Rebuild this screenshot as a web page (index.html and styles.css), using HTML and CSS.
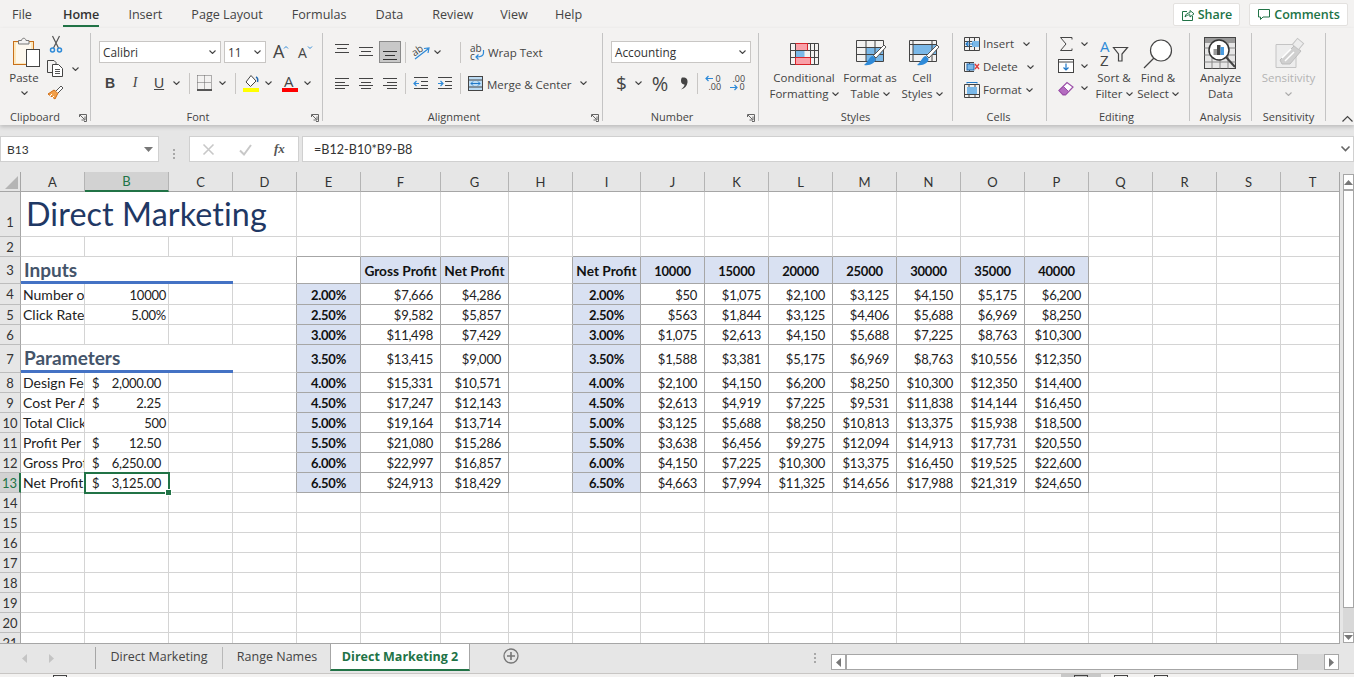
FILE: index.html
```html
<!DOCTYPE html>
<html lang="en">
<head>
<meta charset="utf-8">
<title>Direct Marketing 2 - Excel</title>
<link rel="stylesheet" href="styles.css">
</head>
<body>
<svg class="sprite" width="0" height="0" aria-hidden="true">
  <symbol id="chev" viewBox="0 0 7 4"><path d="M.5.5 3.5 3.5 6.5.5" fill="none" stroke="#444" stroke-width="1.1"/></symbol>
  <symbol id="launch" viewBox="0 0 8 8"><path d="M.5 3V.5H7.500V7.500H5M1 1 5.500 5.500M2.500 6H6V2.500" fill="none" stroke="#666" stroke-width="1"/></symbol>
  <symbol id="lines" viewBox="0 0 14 12"><path d="M0 1.500H14M0 5.500H10M0 8.500H14M0 11.500H10" stroke="#444" stroke-width="1"/></symbol>
</svg>
<div class="app">
  <header class="top">
    <nav class="menu">
      <span>File</span><span class="on">Home</span><span>Insert</span><span>Page Layout</span><span>Formulas</span><span>Data</span><span>Review</span><span>View</span><span>Help</span>
    </nav>
    <div class="actions">
      <button class="act"><svg width="14" height="14" viewBox="0 0 14 14"><path d="M6 3.500H1.500V12.500H11.500V8M4 9C4.500 6 6.500 4.800 9 4.800V2.500L13 5.800 9 9V6.800C7 6.800 5.500 7.500 4 9Z" fill="none" stroke="#217346"/></svg>Share</button>
      <button class="act act-c"><svg width="14" height="13" viewBox="0 0 14 13"><path d="M1.500 1.500H12.500V9H6L3.500 11.500V9H1.500Z" fill="none" stroke="#217346"/></svg>Comments</button>
    </div>
  </header>

  <section class="ribbon">
    <div class="group g-clip">
      <div class="body clip-body">
        <div class="paste">
          <svg width="29" height="32" viewBox="0 0 29 32"><rect x=".5" y="5.500" width="20" height="23" fill="#fde8bd" stroke="#c8701a"/><rect x="3" y="7" width="15" height="20" fill="#fdf8ee"/><path d="M5.500 8V4.500H8.500C9 1.500 12.500 1.500 13 4.500H16V8Z" fill="#f3f2f1" stroke="#777"/><rect x="13.500" y="13.500" width="13" height="17" fill="#fff" stroke="#444"/></svg>
          <span class="t">Paste</span>
          <svg class="c" width="7" height="4"><use href="#chev"/></svg>
        </div>
        <div class="clip-tools">
          <svg class="ci1" width="12" height="17" viewBox="0 0 12 17"><path d="M2.500 0 8.500 12M9.500 0 3.500 12" stroke="#555" stroke-width="1.200" fill="none"/><circle cx="2.500" cy="14" r="2" fill="none" stroke="#2e8ad8" stroke-width="1.500"/><circle cx="9.500" cy="14" r="2" fill="none" stroke="#2e8ad8" stroke-width="1.500"/></svg>
          <div class="copy-row"><svg width="16" height="17" viewBox="0 0 16 17"><path d="M6 12.500H.5V.5H7L9 2.500V4" fill="none" stroke="#444"/><path d="M5.500 4.500H11.500L15.500 8.500V16.500H5.500Z" fill="#fff" stroke="#444"/><path d="M8 9.500H13M8 11.500H13M8 13.500H13" stroke="#555"/></svg><svg class="m9" width="7" height="4"><use href="#chev"/></svg></div>
          <svg class="ci3" width="17" height="16" viewBox="0 0 17 16"><path d="M1 9 8 14 11 8 7 5Z" fill="#f2a04b" stroke="#d06c12"/><path d="M3 11 5 9M5 13 7 11" stroke="#fff"/><path d="M9 6 14 1 16 3 11 8" fill="#fff" stroke="#555"/></svg>
        </div>
      </div>
      <div class="label">Clipboard<svg class="launch" width="8" height="8"><use href="#launch"/></svg></div>
    </div>

    <div class="group g-font">
      <div class="body stack">
        <div class="row">
          <div class="sel w122"><span>Calibri</span><svg width="7" height="4"><use href="#chev"/></svg></div>
          <div class="sel w42 m3"><span>11</span><svg width="7" height="4"><use href="#chev"/></svg></div>
          <svg class="m7" width="15" height="15" viewBox="0 0 15 15"><text x="0" y="13" class="glyph g18">A</text><path d="M11 3.500 13 1.500 15 3.500" fill="none" stroke="#2e8ad8"/></svg>
          <svg class="m10" width="15" height="15" viewBox="0 0 15 15"><text x="0" y="13" class="glyph g14">A</text><path d="M10 1.500 12 3.500 14 1.500" fill="none" stroke="#2e8ad8"/></svg>
        </div>
        <div class="row">
          <span class="fmt b m6">B</span>
          <span class="fmt i m15">I</span>
          <span class="fmt u m14">U</span>
          <svg class="m9" width="7" height="4"><use href="#chev"/></svg>
          <i class="vsep m9"></i>
          <svg class="m7" width="15" height="16" viewBox="0 0 15 16"><path d="M.5 .5H14.500V14M.5.5V14M7.500.5V14M.5 7.500H14.500" fill="none" stroke="#666" stroke-dasharray="1 1"/><path d="M0 15H15" stroke="#222" stroke-width="1.500"/></svg>
          <svg class="m7" width="7" height="4"><use href="#chev"/></svg>
          <i class="vsep m9"></i>
          <svg class="m7" width="16" height="18" viewBox="0 0 16 18"><path d="M8 1.500 13 7 7.500 12.500 3 8Z" fill="#fff" stroke="#444"/><path d="M13 3C15 4 15 6 14.500 8" fill="none" stroke="#2068b0" stroke-width="1.500"/><rect y="14" width="16" height="4" fill="#ffff00"/></svg>
          <svg class="m6" width="7" height="4"><use href="#chev"/></svg>
          <svg class="m10" width="16" height="18" viewBox="0 0 16 18"><text x="2" y="13" class="glyph g15">A</text><rect y="14" width="16" height="4" fill="#ff0000"/></svg>
          <svg class="m6" width="7" height="4"><use href="#chev"/></svg>
        </div>
      </div>
      <div class="label">Font<svg class="launch" width="8" height="8"><use href="#launch"/></svg></div>
    </div>

    <div class="group g-align">
      <div class="body stack">
        <div class="row">
          <svg width="14" height="18" viewBox="0 0 14 18"><path d="M0 1.500H14M2 5.500H12M0 9.500H14" stroke="#444"/></svg>
          <svg class="m10" width="14" height="18" viewBox="0 0 14 18"><path d="M0 4.500H14M2 8.500H12M0 12.500H14" stroke="#444"/></svg>
          <span class="box m6"><svg width="14" height="18" viewBox="0 0 14 18"><path d="M0 8.500H14M2 12.500H12M0 16.500H14" stroke="#333"/></svg></span>
          <i class="vsep m4"></i>
          <svg class="m7" width="19" height="15" viewBox="0 0 19 15"><text x="0" y="9" class="glyph g10" transform="rotate(-35 5 8)">ab</text><path d="M2 14 15 4M11 3.500 16 3 15 8" fill="none" stroke="#2e8ad8" stroke-width="1.200"/></svg>
          <svg class="m2" width="7" height="4"><use href="#chev"/></svg>
          <i class="vsep m19"></i>
          <svg class="m9" width="15" height="17" viewBox="0 0 15 17"><text x="0" y="8" class="glyph g10">ab</text><text x="0" y="16" class="glyph g10">c</text><path d="M13.500 6V9C13.500 12 11 13 6 13M8.500 10.500 6 13 8.500 15.500" fill="none" stroke="#2e8ad8" stroke-width="1.200"/></svg>
          <span class="t m3">Wrap Text</span>
        </div>
        <div class="row">
          <svg width="14" height="12"><use href="#lines"/></svg>
          <svg class="m10" width="14" height="12" viewBox="0 0 14 12"><path d="M0 1.500H14M2 5.500H12M0 8.500H14M2 11.500H12" stroke="#444"/></svg>
          <svg class="m10" width="14" height="12" viewBox="0 0 14 12"><path d="M0 1.500H14M4 5.500H14M0 8.500H14M4 11.500H14" stroke="#444"/></svg>
          <i class="vsep m8"></i>
          <svg class="m8" width="14" height="12" viewBox="0 0 14 12"><path d="M0 .5H14M7 4.500H14M7 8.500H14M0 11.500H14" stroke="#444"/><path d="M5 6.500H0M2.500 4 0 6.500 2.500 9" fill="none" stroke="#2e8ad8" stroke-width="1.200"/></svg>
          <svg class="m10" width="14" height="12" viewBox="0 0 14 12"><path d="M0 .5H14M7 4.500H14M7 8.500H14M0 11.500H14" stroke="#444"/><path d="M0 6.500H5M2.500 4 5 6.500 2.500 9" fill="none" stroke="#2e8ad8" stroke-width="1.200"/></svg>
          <i class="vsep m8"></i>
          <svg class="m7" width="15" height="15" viewBox="0 0 15 15"><rect x=".5" y=".5" width="14" height="14" fill="#bcdcf4" stroke="#444"/><path d="M.5 4H14.500M.5 11H14.500" stroke="#444"/><path d="M3 7.500H12M5 5.500 3 7.500 5 9.500M10 5.500 12 7.500 10 9.500" fill="none" stroke="#1f78c8"/></svg>
          <span class="t low m4">Merge &amp; Center</span>
          <svg class="m8" width="7" height="4"><use href="#chev"/></svg>
        </div>
      </div>
      <div class="label">Alignment<svg class="launch" width="8" height="8"><use href="#launch"/></svg></div>
    </div>

    <div class="group g-num">
      <div class="body stack">
        <div class="row"><div class="sel w140"><span>Accounting</span><svg width="7" height="4"><use href="#chev"/></svg></div></div>
        <div class="row">
          <span class="sym m5">$</span>
          <svg class="m8" width="7" height="4"><use href="#chev"/></svg>
          <span class="sym pct m8">%</span>
          <svg class="m9" width="10" height="13" viewBox="0 0 10 13"><path d="M3 0.500C7 0 9 2 8.500 5.500 8 9 5.500 11.500 2 12.500 4.500 10.500 5.500 9 5.500 7.500 3.500 7.500 2 6 2 4 2 2 2.500 1 3 .5Z" fill="#444"/></svg>
          <i class="vsep m8"></i>
          <svg class="m7" width="16" height="16" viewBox="0 0 16 16"><path d="M8 3.500H1M3.500 1 1 3.500 3.500 6" fill="none" stroke="#2e8ad8" stroke-width="1.200"/><text x="10.500" y="7" class="glyph g9">0</text><text x="3.400" y="15" class="glyph g9">.00</text></svg>
          <svg class="m8" width="16" height="16" viewBox="0 0 16 16"><text x="3.400" y="7" class="glyph g9">.00</text><path d="M1 12.500H8M5.500 10 8 12.500 5.500 15" fill="none" stroke="#2e8ad8" stroke-width="1.200"/><text x="10.500" y="15" class="glyph g9">0</text></svg>
        </div>
      </div>
      <div class="label">Number<svg class="launch" width="8" height="8"><use href="#launch"/></svg></div>
    </div>

    <div class="group g-styles">
      <div class="body big-row">
        <div class="big w74">
          <div class="big-ic"><svg width="29" height="22" viewBox="0 0 29 22"><path d="M5.500 .5H17.500V7.500H5.500Z" fill="#f9a0a8"/><path d="M5.500 7.500H14.500V14.500H5.500Z" fill="#7ab8e8"/><path d="M5.500 14.500H20.500V21.500H5.500Z" fill="#f9a0a8"/><path d="M.5.5H28.500V21.500H.5ZM.5 7.500H28.500M.5 14.500H28.500M5.500.5V21.500M20.500.5V21.500M24.500.5V21.500" fill="none" stroke="#444"/><path d="M5.500.5H17.500V7.500M5.500 14.500H20.500V21.500H5.500Z" fill="none" stroke="#d8232a"/></svg></div>
          <span class="t">Conditional</span><span class="t">Formatting <svg width="7" height="4"><use href="#chev"/></svg></span>
        </div>
        <div class="big w58">
          <div class="big-ic"><svg width="31" height="27" viewBox="0 0 31 27"><path d="M10 7.500H27.500V21.500H10Z" fill="#7ab8e8"/><path d="M.5.5H27.500V21.500H.5ZM.5 7.500H27.500M.5 14.500H27.500M10 .5V21.500M19 .5V21.500" fill="none" stroke="#444"/><path d="M30 7 20 18 17.500 15.500 28 5Z" fill="#fff" stroke="#555"/><path d="M17 16C13 16.500 13 21 8 25 14 26 20 23 19.500 18.500Z" fill="#2e8ad8"/></svg></div>
          <span class="t">Format as</span><span class="t">Table <svg width="7" height="4"><use href="#chev"/></svg></span>
        </div>
        <div class="big w46">
          <div class="big-ic"><svg width="31" height="27" viewBox="0 0 31 27"><path d="M4 4.500H27V15H4Z" fill="#7ab8e8"/><path d="M.5.5H27.500V21.500H.5ZM.5 4.500H27.500M.5 14.500H27.500M4 .5V21.500M23 .5V21.500" fill="none" stroke="#444"/><path d="M30 7 20 18 17.500 15.500 28 5Z" fill="#fff" stroke="#555"/><path d="M17 16C13 16.500 13 21 8 25 14 26 20 23 19.500 18.500Z" fill="#2e8ad8"/></svg></div>
          <span class="t">Cell</span><span class="t">Styles <svg width="7" height="4"><use href="#chev"/></svg></span>
        </div>
      </div>
      <div class="label">Styles</div>
    </div>

    <div class="group g-cells">
      <div class="body cell-list">
        <div class="cell-row"><svg width="16" height="14" viewBox="0 0 16 14"><path d="M.5.5H15.500V13.500H.5ZM.5 4.500H15.500M.5 9.500H15.500M5.500.5V13.500M10.500.5V13.500" fill="none" stroke="#444"/><rect x="8" y="4" width="7" height="6" fill="#7ab8e8"/><path d="M9 7H2M4.500 4.500 2 7 4.500 9.500" fill="none" stroke="#1f78c8" stroke-width="1.200"/></svg><span class="t m3">Insert</span><svg class="m9" width="7" height="4"><use href="#chev"/></svg></div>
        <div class="cell-row"><svg width="16" height="14" viewBox="0 0 16 14"><path d="M.5 2.500H10M.5 11.500H10M.5 2.500V11.500M5.500 2.500V11.500" fill="none" stroke="#444"/><rect x="3" y="4" width="7" height="6" fill="#7ab8e8" stroke="#2068b0"/><path d="M11 4 15 9M15 4 11 9" stroke="#e03c3c" stroke-width="1.300"/></svg><span class="t m3">Delete</span><svg class="m9" width="7" height="4"><use href="#chev"/></svg></div>
        <div class="cell-row"><svg width="16" height="16" viewBox="0 0 16 16"><path d="M.5 2.500H15.500V15.500H.5ZM.5 12.500H15.500M5 2.500V15.500M11 2.500V15.500" fill="none" stroke="#444"/><rect x="3" y="5" width="10" height="7" fill="#7ab8e8"/><path d="M3 .5H13M3 0V1.500M13 0V1.500" stroke="#1f78c8"/></svg><span class="t m3">Format</span><svg class="m4" width="7" height="4"><use href="#chev"/></svg></div>
      </div>
      <div class="label">Cells</div>
    </div>

    <div class="group g-edit">
      <div class="body big-row">
        <div class="edit-col">
          <div class="edit-row"><svg class="m2" width="12" height="14" viewBox="0 0 12 14"><path d="M12 2.500V.5H.5L6 7 .5 13.500H12V11.500" fill="none" stroke="#444"/></svg><svg class="m9" width="7" height="4"><use href="#chev"/></svg></div>
          <div class="edit-row"><svg width="16" height="14" viewBox="0 0 16 14"><rect x=".5" y=".5" width="15" height="13" fill="#fff" stroke="#444"/><path d="M.5 3H15.500" stroke="#444"/><path d="M8 4.500V11M5.500 8.500 8 11 10.500 8.500" fill="none" stroke="#1f78c8" stroke-width="1.200"/></svg><svg class="m7" width="7" height="4"><use href="#chev"/></svg></div>
          <div class="edit-row"><svg width="16" height="15" viewBox="0 0 16 15"><path d="M1 9.500 9 1.500 15 6 7.500 14H5Z" fill="#fff" stroke="#9b4fa8" stroke-width="1.200"/><path d="M1 9.500 5 13.500H7.500L10.500 10.500 5.500 5.500Z" fill="#b46cc0" stroke="#9b4fa8"/></svg><svg class="m7" width="7" height="4"><use href="#chev"/></svg></div>
        </div>
        <div class="big w44">
          <div class="big-ic"><svg width="29" height="27" viewBox="0 0 29 27"><text x="0" y="12" class="glyph az">A</text><text x="0" y="26" class="glyph z">Z</text><path d="M13.500 7.500H27.500L22 14V21H18.500V14Z" fill="none" stroke="#444" stroke-width="1.200"/></svg></div>
          <span class="t">Sort &amp;</span><span class="t">Filter <svg width="7" height="4"><use href="#chev"/></svg></span>
        </div>
        <div class="big w44">
          <div class="big-ic"><svg width="30" height="30" viewBox="0 0 30 30"><circle cx="18" cy="11.500" r="10.500" fill="#fff" stroke="#444" stroke-width="1.200"/><path d="M11 19 1 29" stroke="#444" stroke-width="1.200"/></svg></div>
          <span class="t">Find &amp;</span><span class="t">Select <svg width="7" height="4"><use href="#chev"/></svg></span>
        </div>
      </div>
      <div class="label">Editing</div>
    </div>

    <div class="group g-an">
      <div class="body big-row">
        <div class="big wfull">
          <div class="big-ic"><svg width="33" height="33" viewBox="0 0 33 33"><rect x=".5" y=".5" width="31" height="31" fill="#e6e6e6" stroke="#444"/><rect x="1" y="1" width="30" height="5" fill="#999"/><path d="M.5 11H31.500M.5 18H31.500M.5 25H31.500M8 6V31.500M16 6V31.500M24 6V31.500" stroke="#888"/><circle cx="15" cy="13" r="10" fill="#fff" stroke="#333" stroke-width="1.500"/><path d="M22 20 31 30" stroke="#444" stroke-width="2"/><rect x="9.500" y="12" width="3.500" height="6" fill="#9a9a9a"/><rect x="13" y="8" width="3.500" height="10" fill="#444"/><rect x="16.500" y="10" width="3.500" height="8" fill="#4a9ce0"/></svg></div>
          <span class="t">Analyze</span><span class="t">Data</span>
        </div>
      </div>
      <div class="label">Analysis</div>
    </div>

    <div class="group g-sens">
      <div class="body big-row">
        <div class="big wfull dim">
          <div class="big-ic"><svg width="28" height="30" viewBox="0 0 28 30"><path d="M1 5.500H21V28.500H1Z" fill="#ededed" stroke="#c4c4c4"/><path d="M5 21 19 7 26 12 15 25 7 25Z" fill="#d0d0d0" stroke="#bdbdbd"/><path d="M7 19 16 10M10 22 19 13" stroke="#fff" stroke-width="1.500"/><rect x="19" y="1" width="8" height="8" fill="#ededed" stroke="#c4c4c4" transform="rotate(40 23 5)"/></svg></div>
          <span class="t">Sensitivity</span>
          <svg class="c" width="7" height="4" opacity=".4"><use href="#chev"/></svg>
        </div>
      </div>
      <div class="label">Sensitivity</div>
    </div>

    <svg class="collapse" width="11" height="6" viewBox="0 0 11 6"><path d="M.5 5.500 5.500.5 10.500 5.500" fill="none" stroke="#444" stroke-width="1.200"/></svg>
  </section>

  <section class="fbar">
    <div class="namebox"><span>B13</span><svg width="9" height="5" viewBox="0 0 9 5"><path d="M0 0H9L4.500 5Z" fill="#777"/></svg></div>
    <div class="grip"><i></i><i></i><i></i></div>
    <div class="fx-box">
      <svg width="13" height="13" viewBox="0 0 13 13"><path d="M1.500 1.500 11.500 11.500M11.500 1.500 1.500 11.500" stroke="#c8c8c8" stroke-width="1.600"/></svg>
      <svg width="13" height="13" viewBox="0 0 13 13"><path d="M1 7.500 5 11.500 12 2" fill="none" stroke="#c8c8c8" stroke-width="2"/></svg>
      <span class="fx">fx</span>
    </div>
    <div class="formula"><span>=B12-B10*B9-B8</span><svg width="9" height="6" viewBox="0 0 9 6"><path d="M.5.5 4.500 4.500 8.500.5" fill="none" stroke="#666" stroke-width="1.600"/></svg></div>
  </section>

  <section class="sheetwrap">
    <div class="sheet">
      <table class="grid">
        <colgroup>
          <col class="c-h"><col class="c64"><col class="c84"><col class="c64"><col class="c64"><col class="c64"><col class="c80"><col class="c68"><col class="c64"><col class="c68"><col class="c64"><col class="c64"><col class="c64"><col class="c64"><col class="c64"><col class="c64"><col class="c64"><col class="c64"><col class="c64"><col class="c64"><col class="c64">
        </colgroup>
        <thead>
          <tr class="r-head"><th class="corner"><svg width="13" height="13" viewBox="0 0 13 13"><path d="M13 0V13H0Z" fill="#b5b5b5"/></svg></th><th>A</th><th class="cur">B</th><th>C</th><th>D</th><th>E</th><th>F</th><th>G</th><th>H</th><th>I</th><th>J</th><th>K</th><th>L</th><th>M</th><th>N</th><th>O</th><th>P</th><th>Q</th><th>R</th><th>S</th><th>T</th></tr>
        </thead>
        <tbody>
          <tr class="r1"><th>1</th><td colspan="4" class="title">Direct Marketing</td><td></td><td></td><td></td><td></td><td></td><td></td><td></td><td></td><td></td><td></td><td></td><td></td><td></td><td></td><td></td><td></td></tr>
          <tr><th>2</th><td></td><td></td><td></td><td></td><td class="eb"></td><td class="eb"></td><td class="eb"></td><td></td><td class="eb"></td><td class="eb"></td><td class="eb"></td><td class="eb"></td><td class="eb"></td><td class="eb"></td><td class="eb"></td><td class="eb"></td><td></td><td></td><td></td><td></td></tr>
          <tr class="r3"><th>3</th><td colspan="3" class="sec">Inputs</td><td class="er"></td><td class="d"></td><td class="d hd txt">Gross Profit</td><td class="d hd txt">Net Profit</td><td class="er"></td><td class="d hd txt">Net Profit</td><td class="d hd">10000</td><td class="d hd">15000</td><td class="d hd">20000</td><td class="d hd">25000</td><td class="d hd">30000</td><td class="d hd">35000</td><td class="d hd">40000</td><td></td><td></td><td></td><td></td></tr>
          <tr class="r4"><th>4</th><td class="lbl">Number of Customers</td><td class="num">10000</td><td></td><td class="er"></td><td class="d hd">2.00%</td><td class="d v">$7,666</td><td class="d v">$4,286</td><td class="er"></td><td class="d hd">2.00%</td><td class="d v">$50</td><td class="d v">$1,075</td><td class="d v">$2,100</td><td class="d v">$3,125</td><td class="d v">$4,150</td><td class="d v">$5,175</td><td class="d v">$6,200</td><td></td><td></td><td></td><td></td></tr>
          <tr><th>5</th><td class="lbl">Click Rate</td><td class="num">5.00%</td><td></td><td class="er"></td><td class="d hd">2.50%</td><td class="d v">$9,582</td><td class="d v">$5,857</td><td class="er"></td><td class="d hd">2.50%</td><td class="d v">$563</td><td class="d v">$1,844</td><td class="d v">$3,125</td><td class="d v">$4,406</td><td class="d v">$5,688</td><td class="d v">$6,969</td><td class="d v">$8,250</td><td></td><td></td><td></td><td></td></tr>
          <tr><th>6</th><td></td><td></td><td></td><td class="er"></td><td class="d hd">3.00%</td><td class="d v">$11,498</td><td class="d v">$7,429</td><td class="er"></td><td class="d hd">3.00%</td><td class="d v">$1,075</td><td class="d v">$2,613</td><td class="d v">$4,150</td><td class="d v">$5,688</td><td class="d v">$7,225</td><td class="d v">$8,763</td><td class="d v">$10,300</td><td></td><td></td><td></td><td></td></tr>
          <tr class="r7"><th>7</th><td colspan="3" class="sec">Parameters</td><td class="er"></td><td class="d hd">3.50%</td><td class="d v">$13,415</td><td class="d v">$9,000</td><td class="er"></td><td class="d hd">3.50%</td><td class="d v">$1,588</td><td class="d v">$3,381</td><td class="d v">$5,175</td><td class="d v">$6,969</td><td class="d v">$8,763</td><td class="d v">$10,556</td><td class="d v">$12,350</td><td></td><td></td><td></td><td></td></tr>
          <tr><th>8</th><td class="lbl">Design Fee</td><td class="acct"><div><span>$</span><span>2,000.00</span></div></td><td></td><td class="er"></td><td class="d hd">4.00%</td><td class="d v">$15,331</td><td class="d v">$10,571</td><td class="er"></td><td class="d hd">4.00%</td><td class="d v">$2,100</td><td class="d v">$4,150</td><td class="d v">$6,200</td><td class="d v">$8,250</td><td class="d v">$10,300</td><td class="d v">$12,350</td><td class="d v">$14,400</td><td></td><td></td><td></td><td></td></tr>
          <tr><th>9</th><td class="lbl">Cost Per Ad</td><td class="acct"><div><span>$</span><span>2.25</span></div></td><td></td><td class="er"></td><td class="d hd">4.50%</td><td class="d v">$17,247</td><td class="d v">$12,143</td><td class="er"></td><td class="d hd">4.50%</td><td class="d v">$2,613</td><td class="d v">$4,919</td><td class="d v">$7,225</td><td class="d v">$9,531</td><td class="d v">$11,838</td><td class="d v">$14,144</td><td class="d v">$16,450</td><td></td><td></td><td></td><td></td></tr>
          <tr><th>10</th><td class="lbl">Total Clicks</td><td class="num">500</td><td></td><td class="er"></td><td class="d hd">5.00%</td><td class="d v">$19,164</td><td class="d v">$13,714</td><td class="er"></td><td class="d hd">5.00%</td><td class="d v">$3,125</td><td class="d v">$5,688</td><td class="d v">$8,250</td><td class="d v">$10,813</td><td class="d v">$13,375</td><td class="d v">$15,938</td><td class="d v">$18,500</td><td></td><td></td><td></td><td></td></tr>
          <tr><th>11</th><td class="lbl">Profit Per Click</td><td class="acct"><div><span>$</span><span>12.50</span></div></td><td></td><td class="er"></td><td class="d hd">5.50%</td><td class="d v">$21,080</td><td class="d v">$15,286</td><td class="er"></td><td class="d hd">5.50%</td><td class="d v">$3,638</td><td class="d v">$6,456</td><td class="d v">$9,275</td><td class="d v">$12,094</td><td class="d v">$14,913</td><td class="d v">$17,731</td><td class="d v">$20,550</td><td></td><td></td><td></td><td></td></tr>
          <tr><th>12</th><td class="lbl">Gross Profit</td><td class="acct"><div><span>$</span><span>6,250.00</span></div></td><td></td><td class="er"></td><td class="d hd">6.00%</td><td class="d v">$22,997</td><td class="d v">$16,857</td><td class="er"></td><td class="d hd">6.00%</td><td class="d v">$4,150</td><td class="d v">$7,225</td><td class="d v">$10,300</td><td class="d v">$13,375</td><td class="d v">$16,450</td><td class="d v">$19,525</td><td class="d v">$22,600</td><td></td><td></td><td></td><td></td></tr>
          <tr><th class="cur-row">13</th><td class="lbl">Net Profit</td><td class="acct active"><div><span>$</span><span>3,125.00</span></div><i class="handle"></i></td><td></td><td class="er"></td><td class="d hd">6.50%</td><td class="d v">$24,913</td><td class="d v">$18,429</td><td class="er"></td><td class="d hd">6.50%</td><td class="d v">$4,663</td><td class="d v">$7,994</td><td class="d v">$11,325</td><td class="d v">$14,656</td><td class="d v">$17,988</td><td class="d v">$21,319</td><td class="d v">$24,650</td><td></td><td></td><td></td><td></td></tr>
          <tr><th>14</th><td></td><td></td><td></td><td></td><td></td><td></td><td></td><td></td><td></td><td></td><td></td><td></td><td></td><td></td><td></td><td></td><td></td><td></td><td></td><td></td></tr>
          <tr><th>15</th><td></td><td></td><td></td><td></td><td></td><td></td><td></td><td></td><td></td><td></td><td></td><td></td><td></td><td></td><td></td><td></td><td></td><td></td><td></td><td></td></tr>
          <tr><th>16</th><td></td><td></td><td></td><td></td><td></td><td></td><td></td><td></td><td></td><td></td><td></td><td></td><td></td><td></td><td></td><td></td><td></td><td></td><td></td><td></td></tr>
          <tr><th>17</th><td></td><td></td><td></td><td></td><td></td><td></td><td></td><td></td><td></td><td></td><td></td><td></td><td></td><td></td><td></td><td></td><td></td><td></td><td></td><td></td></tr>
          <tr><th>18</th><td></td><td></td><td></td><td></td><td></td><td></td><td></td><td></td><td></td><td></td><td></td><td></td><td></td><td></td><td></td><td></td><td></td><td></td><td></td><td></td></tr>
          <tr><th>19</th><td></td><td></td><td></td><td></td><td></td><td></td><td></td><td></td><td></td><td></td><td></td><td></td><td></td><td></td><td></td><td></td><td></td><td></td><td></td><td></td></tr>
          <tr><th>20</th><td></td><td></td><td></td><td></td><td></td><td></td><td></td><td></td><td></td><td></td><td></td><td></td><td></td><td></td><td></td><td></td><td></td><td></td><td></td><td></td></tr>
          <tr><th>21</th><td></td><td></td><td></td><td></td><td></td><td></td><td></td><td></td><td></td><td></td><td></td><td></td><td></td><td></td><td></td><td></td><td></td><td></td><td></td><td></td></tr>
        </tbody>
      </table>
    </div>
    <div class="vscroll">
      <div class="sbtn"><svg width="9" height="5" viewBox="0 0 9 5"><path d="M4.500 0 9 5H0Z" fill="#777"/></svg></div>
      <div class="vthumb"></div>
      <div class="vtrack"></div>
      <div class="sbtn"><svg width="9" height="5" viewBox="0 0 9 5"><path d="M0 0H9L4.500 5Z" fill="#777"/></svg></div>
    </div>
  </section>

  <section class="tabs">
    <div class="tabnav">
      <svg width="5" height="9" viewBox="0 0 5 9"><path d="M5 0V9L0 4.500Z" fill="#c4c4c4"/></svg>
      <svg width="5" height="9" viewBox="0 0 5 9"><path d="M0 0V9L5 4.500Z" fill="#c4c4c4"/></svg>
    </div>
    <div class="tab first">Direct Marketing</div>
    <div class="tab second">Range Names</div>
    <div class="tab active-tab">Direct Marketing 2</div>
    <svg class="add" width="16" height="16" viewBox="0 0 16 16"><circle cx="8" cy="8" r="7" fill="none" stroke="#777" stroke-width="1.300"/><path d="M8 4V12M4 8H12" stroke="#777" stroke-width="1.600"/></svg>
    <div class="grip tabgrip"><i></i><i></i><i></i></div>
    <div class="hscroll">
      <div class="sbtn"><svg width="5" height="9" viewBox="0 0 5 9"><path d="M5 0V9L0 4.500Z" fill="#777"/></svg></div>
      <div class="hthumb"></div>
      <div class="htrack"></div>
      <div class="sbtn"><svg width="5" height="9" viewBox="0 0 5 9"><path d="M0 0V9L5 4.500Z" fill="#777"/></svg></div>
    </div>
  </section>

  <footer class="status">
    <i class="macro"></i>
    <div class="views">
      <span class="view on"><i></i></span><span class="view"><i></i></span><span class="view"><i></i></span>
    </div>
  </footer>
</div>
</body>
</html>
```

FILE: styles.css
```css
* { box-sizing: border-box; }
html, body { margin: 0; height: 100%; overflow: hidden; }
body { font-family: "Open Sans", "Noto Sans", sans-serif; color: #444; background: #e6e6e6; }
.sprite { position: absolute; }
svg { display: block; flex: none; overflow: visible; }
i { display: block; font-style: normal; }
.app { width: 1354px; height: 677px; display: flex; flex-direction: column; overflow: hidden; }

.m2 { margin-left: 2px; } .m3 { margin-left: 3px; } .m4 { margin-left: 4px; } .m5 { margin-left: 5px; }
.m6 { margin-left: 6px; } .m7 { margin-left: 7px; } .m8 { margin-left: 8px; } .m9 { margin-left: 9px; }
.m10 { margin-left: 10px; } .m14 { margin-left: 14px; } .m15 { margin-left: 15px; } .m19 { margin-left: 19px; }

/* top menu */
.top { height: 28px; background: #f3f2f1; display: flex; justify-content: space-between; flex: none; }
.menu { display: flex; gap: 29px; padding-left: 12px; font-size: 12.600px; line-height: 29px; color: #444; }
.menu span { height: 27px; white-space: nowrap; }
.menu .on { color: #333; font-weight: 600; border-bottom: 2px solid #217346; height: 27px; }
.menu span:nth-child(1) { margin-right: 2px; }
.menu span:nth-child(7), .menu span:nth-child(8) { margin-right: -2px; }
.actions { display: flex; gap: 9px; padding: 3px 6px 0 0; }
.act { height: 23px; width: 67px; display: flex; align-items: center; justify-content: center; gap: 3px; background: #fff; border: 1px solid #e3e1df; border-radius: 2px; font: 600 12.500px "Open Sans", sans-serif; color: #217346; padding: 0; }
.act-c { width: 99px; }

/* ribbon */
.ribbon { height: 97px; background: #f3f2f1; display: flex; padding-top: 5px; flex: none; box-shadow: 0 2px 4px rgba(0,0,0,.18); position: relative; z-index: 2; }
.group { height: 88px; border-right: 1px solid #c4c4c4; display: flex; flex-direction: column; flex: none; }
.body { height: 74px; flex: none; }
.label { position: relative; text-align: center; font-size: 11px; line-height: 14px; color: #444; height: 14px; margin-top: 3px; flex: none; }
.launch { position: absolute; right: 3px; top: 4px; }
.t { font-size: 11.500px; line-height: 16px; white-space: nowrap; color: #444; display: inline-flex; align-items: center; gap: 3px; }

.g-clip { width: 91px; }
.g-font { width: 232px; padding-left: 8px; }
.g-align { width: 280px; padding-left: 12px; }
.g-num { width: 156px; padding-left: 8px; }
.g-styles { width: 194px; padding-left: 8px; }
.g-cells { width: 94px; padding-left: 11px; }
.g-edit { width: 143px; padding-left: 11px; }
.g-an { width: 62px; }
.g-sens { width: 74px; }
.g-clip .label { padding-right: 20px; }
.g-font .label { margin-left: -8px; padding-right: 17px; }
.g-align .label { margin-left: -12px; padding-right: 17px; }
.g-num .label { margin-left: -8px; padding-right: 17px; }
.g-styles .label { margin-left: -8px; }
.g-cells .label { margin-left: -11px; padding-right: 2px; }
.g-edit .label { margin-left: -11px; padding-right: 3px; }

.stack { padding-top: 8px; display: flex; flex-direction: column; gap: 9px; }
.row { display: flex; align-items: center; height: 22px; }
.row .t { padding-top: 2px; }
.row .low { padding-top: 4px; }
.sel { height: 22px; background: #fff; border: 1px solid #c8c6c4; display: flex; align-items: center; justify-content: space-between; padding: 0 4px 0 3px; font-size: 11.800px; color: #333; }
.w122 { width: 122px; } .w42 { width: 42px; } .w140 { width: 140px; }
.fmt { width: 10px; text-align: center; font-size: 14px; color: #444; font-family: "Liberation Sans", sans-serif; }
.fmt.b { font-weight: 700; }
.fmt.i { font-style: italic; font-family: "Liberation Serif", serif; }
.fmt.u { text-decoration: underline; }
.vsep { width: 1px; height: 21px; background: #c8c6c4; }
.box { width: 22px; height: 22px; background: #c8c8c8; border: 1px solid #8a8a8a; display: flex; align-items: flex-start; justify-content: center; padding-top: 1px; }
.sym { font-size: 19px; width: 11px; text-align: center; color: #444; }
.pct { width: 20px; font-size: 20px; }
.glyph { fill: #444; font-family: "Open Sans", sans-serif; }
.g18 { font-size: 18px; } .g15 { font-size: 15px; } .g14 { font-size: 14px; } .g10 { font-size: 10px; } .g9 { font-size: 9px; }
.az { font-size: 15px; fill: #2e8ad8; } .z { font-size: 15px; }

.clip-body { display: flex; }
.paste { width: 47px; padding: 3px 0 0 13px; display: flex; flex-direction: column; }
.paste .t { margin: 2px 0 0 -4px; width: 30px; justify-content: center; }
.paste .c { margin: 5px 0 0 8px; }
.clip-tools { padding-top: 3px; display: flex; flex-direction: column; }
.ci1 { margin-left: 3px; }
.copy-row { display: flex; align-items: center; margin-top: 7px; }
.ci3 { margin-top: 8px; }

.big-row { display: flex; padding-top: 4px; }
.big { display: flex; flex-direction: column; align-items: center; }
.big-ic { height: 33px; display: flex; align-items: center; justify-content: center; flex: none; }
.w74 { width: 74px; } .w58 { width: 58px; } .w46 { width: 46px; } .w44 { width: 44px; }
.w58 .big-ic { padding-left: 2px; }
.w46 .big-ic { padding-left: 4px; }
.wfull { width: 100%; }
.dim .t { color: #b4b4b4; }
.dim .c { margin-top: 6px; }

.cell-list { display: flex; flex-direction: column; margin: -1px 0 1px; }
.cell-row { height: 23px; display: flex; align-items: center; }
.edit-col { width: 34px; margin-top: -4px; }
.edit-row { height: 22px; display: flex; align-items: center; }
.collapse { align-self: flex-end; margin: 0 0 3px 16px; }

/* formula bar */
.fbar { height: 47px; padding-top: 11px; display: flex; flex: none; background: #e6e6e6; }
.namebox, .fx-box, .formula { height: 26px; background: #fff; border: 1px solid #d0d0d0; display: flex; align-items: center; }
.namebox { width: 159px; padding: 0 5px 0 6px; justify-content: space-between; font: 12px "Lato", sans-serif; color: #333; }
.grip { width: 30px; display: flex; flex-direction: column; align-items: center; justify-content: center; gap: 2px; }
.grip i { width: 2px; height: 2px; background: #a8a8a8; }
.fx-box { width: 110px; padding-left: 12px; gap: 24px; }
.fx { font: italic 700 13px "Liberation Serif", serif; color: #555; margin-left: -2px; }
.formula { flex: 1; margin-left: 3px; padding: 0 3px 0 11px; justify-content: space-between; font: 12.600px "Lato", sans-serif; color: #333; }

/* sheet */
.sheetwrap { height: 472px; display: flex; flex: none; }
.sheet { width: 1340px; height: 472px; overflow: hidden; border-right: 1px solid #a6a6a6; border-bottom: 1px solid #a6a6a6; background: #fff; }
.grid { table-layout: fixed; width: 1345px; border-collapse: separate; border-spacing: 0; font: 13px/16px "Lato", sans-serif; color: #222; letter-spacing: -.25px; }
.c-h { width: 21px; } .c64 { width: 64px; } .c84 { width: 84px; } .c80 { width: 80px; } .c68 { width: 68px; }
.grid tr { height: 20px; }
.grid .r1 { height: 45px; } .grid .r3 { height: 27px; } .grid .r4 { height: 21px; } .grid .r7 { height: 28px; }
.grid td { padding: 0; border-right: 1px solid #d4d4d4; border-bottom: 1px solid #d4d4d4; overflow: hidden; white-space: nowrap; vertical-align: middle; }
.grid th { padding: 0; font-weight: 400; background: #e6e6e6; color: #333; border-right: 1px solid #a6a6a6; border-bottom: 1px solid #bdbdbd; text-align: center; vertical-align: middle; font-size: 13px; letter-spacing: 0; }
.r-head th { height: 20px; border-bottom: 1px solid #a6a6a6; border-right: 1px solid #b4b4b4; }
.r-head .corner { border-right: 1px solid #a6a6a6; }
.corner svg { margin: 2px 0 0 5px; }
.r-head .cur { background: #d2d2d2; color: #217346; border-bottom: 2px solid #217346; }
.r1 th { vertical-align: bottom; padding-bottom: 6px; }
.grid .cur-row { background: #d2d2d2; color: #217346; border-right: 2px solid #217346; }
.grid .title { font-size: 32.300px; line-height: 40px; letter-spacing: .1px; color: #1f3864; padding-left: 5px; overflow: visible; }
.grid .sec { font-size: 19px; line-height: 22px; letter-spacing: 0; font-weight: 700; color: #44546a; padding: 1px 0 0 3px; border-right: 0; border-bottom: 3px solid #4472c4; }
.grid .lbl { padding: 1px 0 0 2px; font-size: 14px; letter-spacing: 0; }
.grid .num { text-align: right; padding: 1px 2px 0 0; }
.acct div { display: flex; justify-content: space-between; padding: 0 7px; }
.grid .active { position: relative; overflow: visible; outline: 2px solid #217346; outline-offset: -1px; }
.handle { position: absolute; right: -3px; bottom: -3px; width: 5px; height: 5px; background: #217346; outline: 1px solid #fff; }
.grid .d { border-right-color: #a6a6a6; border-bottom-color: #a6a6a6; }
.grid .er { border-right-color: #a6a6a6; }
.grid .eb { border-bottom-color: #a6a6a6; }
.grid .hd { background: #d9e1f2; font-weight: 700; text-align: center; color: #111; padding-top: 1px; }
.grid .txt { font-size: 13.700px; letter-spacing: 0; }
.grid .v { text-align: right; padding: 1px 7px 0 0; }

.vscroll { width: 14px; padding: 2px 0 0 3px; display: flex; flex-direction: column; background: #e6e6e6; height: 472px; }
.sbtn { background: #fff; border: 1px solid #a6a6a6; display: flex; align-items: center; justify-content: center; flex: none; }
.vscroll .sbtn { height: 16px; }
.vthumb { height: 418px; background: #fff; border: 1px solid #a6a6a6; flex: none; }
.vtrack { flex: 1; background: #d8d8d8; }
.vscroll .sbtn:last-child { height: 11px; margin-bottom: 1px; }

/* tabs */
.tabs { height: 30px; flex: none; display: flex; align-items: flex-start; background: #e6e6e6; border-bottom: 1px solid #c8c6c4; }
.tabnav { width: 96px; height: 22px; margin-top: 3px; padding-left: 22px; display: flex; align-items: center; gap: 22px; border-right: 1px solid #a6a6a6; }
.tab { font-size: 12.500px; line-height: 25px; height: 26px; white-space: nowrap; color: #444; }
.first { width: 127px; height: 22px; margin-top: 3px; line-height: 19px; text-align: center; border-right: 1px solid #b8b8b8; }
.second { width: 108px; height: 22px; margin-top: 3px; line-height: 19px; text-align: center; }
.active-tab { width: 140px; height: 27px; background: #fff; border: 1px solid #a6a6a6; border-width: 0 1px 2px; border-bottom-color: #217346; font-weight: 700; color: #217346; text-align: center; margin-left: -1px; }
.add { margin: 4px 0 0 33px; }
.tabgrip { width: 8px; height: 22px; margin: 3px 0 0 292px; }
.hscroll { width: 508px; height: 16px; display: flex; margin: 10px 0 0 12px; }
.hscroll .sbtn { width: 15px; }
.hthumb { width: 452px; background: #fff; border: 1px solid #a6a6a6; }
.htrack { flex: 1; background: #d8d8d8; }

/* status */
.status { flex: 1; background: #f3f2f1; display: flex; justify-content: space-between; overflow: hidden; }
.macro { width: 14px; height: 4px; margin: 1px 0 0 53px; border: 1px solid #444; border-bottom: 0; }
.views { display: flex; margin-right: 173px; }
.view { width: 40px; height: 3px; display: flex; justify-content: center; padding-top: 1px; }
.view.on { background: #c8c8c8; }
.view i { width: 14px; height: 4px; border: 1px solid #444; border-bottom: 0; }
```
